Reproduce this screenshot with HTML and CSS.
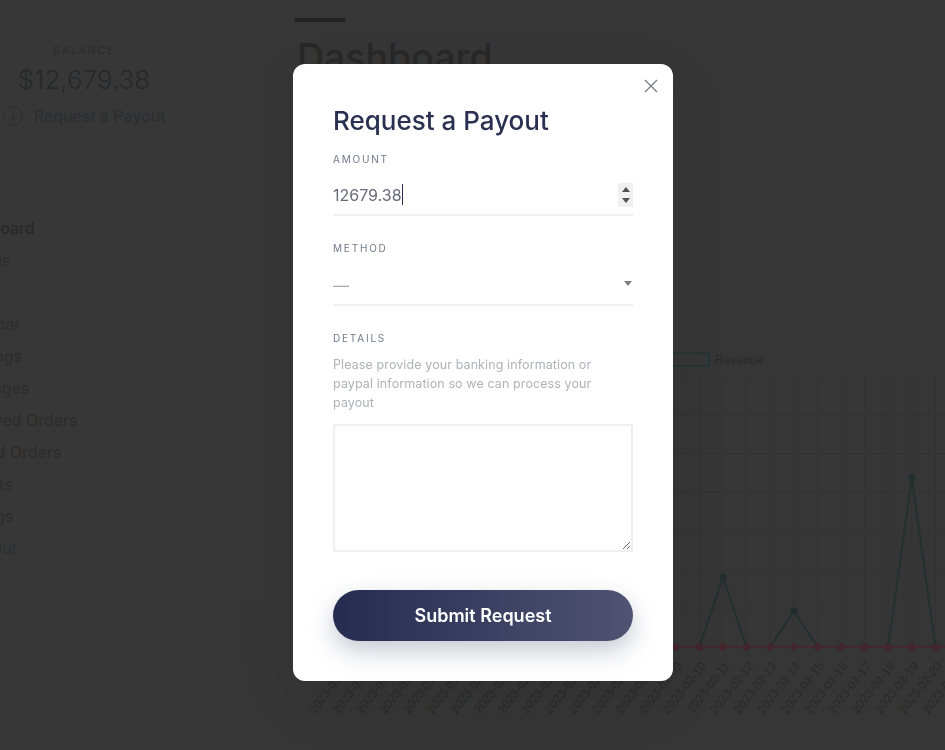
FILE: index.html
```html
<!DOCTYPE html>
<html lang="en">
<head>
  <meta charset="UTF-8" />
  <meta name="viewport" content="width=device-width, initial-scale=1.0"/>
  <title>Dashboard</title>
  <link rel="stylesheet" href="styles.css">
</head>
<body>

  <div class="page">
    <aside class="sidebar">
      <div class="balance">
        <div class="balance-label">BALANCE</div>
        <div class="balance-value">$12,679.38</div>
        <div class="payout-link">
          <svg class="payout-icon" viewBox="0 0 20 20" width="20" height="20" fill="none" stroke="currentColor" stroke-width="1">
            <circle cx="10" cy="10" r="9.300"/>
            <path d="M10 5.500v9M6.500 11l3.500 3.500L13.500 11"/>
          </svg>
          <span>Request a Payout</span>
        </div>
      </div>
      <nav class="menu">
        <a>Dashboard</a>
        <a>Listings</a>
      </nav>
      <nav class="menu">
        <a>Calendar</a>
        <a>Bookings</a>
        <a>Messages</a>
        <a>Received Orders</a>
        <a>Denied Orders</a>
        <a>Payouts</a>
        <a>Settings</a>
        <a class="logout">Sign Out</a>
      </nav>
    </aside>

    <main class="main">
      <div class="title-bar"></div>
      <h1>Dashboard</h1>
      <svg class="chart" id="chart" width="650" height="420" viewBox="0 330 650 420"></svg>
    </main>
  </div>

  <div class="overlay">
    <form class="modal">
      <button type="button" class="close" aria-label="Close">
        <svg viewBox="0 0 14 14" width="14" height="14" fill="none" stroke="currentColor" stroke-width="1.300">
          <path d="M1 1l12 12M13 1L1 13"/>
        </svg>
      </button>
      <h2>Request a Payout</h2>

      <label class="field-label" for="amount">AMOUNT</label>
      <div class="number-wrap">
        <input class="field-input" id="amount" type="number" step="0.01" value="12679.38">
        <span class="caret"></span>
        <span class="spinner"><i class="spin-up"></i><i class="spin-down"></i></span>
      </div>

      <label class="field-label method-label" for="method">METHOD</label>
      <div class="select-wrap">
        <select class="field-input" id="method">
          <option>—</option>
        </select>
      </div>

      <label class="field-label details-label" for="details">DETAILS</label>
      <p class="help">Please provide your banking information or paypal information so we can process your payout</p>
      <textarea class="details" id="details"></textarea>

      <button type="button" class="submit">Submit Request</button>
    </form>
  </div>

  <script>
    // revenue chart behind the modal
    const svg = document.getElementById('chart');
    const NS = 'http://www.w3.org/2000/svg';
    const left = 50.4, step = 23.6, base = 647;
    const peaks = { '02-11': 577, '02-14': 611, '02-19': 478 };

    function add(name, attrs, text) {
      const el = document.createElementNS(NS, name);
      Object.keys(attrs).forEach(k => el.setAttribute(k, attrs[k]));
      if (text) el.textContent = text;
      svg.appendChild(el);
    }

    const days = [];
    for (let i = 26; i <= 31; i++) days.push('01-' + i);
    for (let i = 1; i <= 21; i++) days.push('02-' + String(i).padStart(2, '0'));

    for (let i = 0; i < 8; i++) {
      const y = 376 + i * 38.7;
      add('line', { x1: 40, x2: 650, y1: y, y2: y, class: 'grid' });
    }
    days.forEach((d, i) => {
      const x = left + i * step;
      add('line', { x1: x, x2: x, y1: 376, y2: 653, class: 'grid' });
      add('text', { x: x + 7, y: 666, class: 'tick', transform: `rotate(-52 ${x + 7} 666)` }, '2023-' + d);
    });

    const pts = days.map((d, i) => [left + i * step, peaks[d] || base]);
    add('polyline', { points: pts.map(p => p.join(',')).join(' '), class: 'line-revenue' });
    add('line', { x1: left, x2: 650, y1: base, y2: base, class: 'line-refund' });
    pts.forEach(p => add('circle', { cx: p[0], cy: p[1], r: 3.500, class: 'dot-revenue' }));
    pts.forEach(p => add('circle', { cx: p[0], cy: base, r: 3.500, class: 'dot-refund' }));

    add('rect', { x: 365, y: 353.500, width: 49, height: 12.500, class: 'legend-box' });
    add('text', { x: 420, y: 363.500, class: 'legend' }, 'Revenue');
  </script>
</body>
</html>
```

FILE: styles.css
```css
* { margin: 0; padding: 0; box-sizing: border-box; }

html, body {
  width: 945px;
  height: 750px;
  overflow: hidden;
}

/* the page behind the modal is written in its dimmed colours */
body {
  background: #363636;
  color: #2a2a2a;
  font-family: 'Inter', sans-serif;
}

.page {
  display: flex;
  height: 750px;
}

/* sidebar, pushed off the left edge */
.sidebar {
  flex: none;
  width: 315px;
  height: 600px;
  margin-left: -50px;
  background: #373737;
}

.balance {
  width: 268px;
  padding-top: 44px;
  text-align: center;
}

.balance-label {
  font-size: 11px;
  line-height: 13px;
  letter-spacing: 1.500px;
  color: #2c2c2c;
}

.balance-value {
  margin-top: 6px;
  font-size: 26px;
  line-height: 34px;
  font-weight: 300;
  color: #26282c;
}

.payout-link {
  display: flex;
  justify-content: center;
  align-items: center;
  gap: 11px;
  margin-top: 7px;
  font-size: 16px;
  line-height: 24px;
  color: #2b2d31;
}

.payout-icon { color: #2d2d2d; }

.menu {
  display: flex;
  flex-direction: column;
  margin-bottom: 32px;
  padding-left: 2px;
}

.balance + .menu { margin-top: 84px; }

.menu a {
  font-size: 16px;
  line-height: 32px;
  color: #2c2c2c;
}

.menu a:first-child { color: #262626; }
.menu:last-child a:first-child { color: #2c2c2c; }
.menu a.logout { color: #2a2f33; }

/* main column */
.main {
  flex: 1;
  padding-top: 18px;
  padding-left: 30px;
  min-width: 0;
}

.title-bar {
  width: 50px;
  height: 4px;
  background: #212121;
}

h1 {
  margin-left: 2px;
  margin-top: 12px;
  font-size: 37.500px;
  line-height: 48px;
  font-weight: 500;
  color: #282828;
}

.chart {
  display: block;
  margin-top: 248px;
  overflow: visible;
}

.grid { stroke: #333; stroke-width: 1; }
.tick { font: 12px 'Liberation Sans', sans-serif; fill: #292929; text-anchor: end; }
.legend { font: 12px 'Liberation Sans', sans-serif; fill: #2a2a2a; }
.legend-box { fill: #363636; stroke: #233533; stroke-width: 2; }
.line-revenue { fill: none; stroke: #22302f; stroke-width: 2; }
.line-refund { stroke: #44282d; stroke-width: 2; }
.dot-revenue { fill: #1f2d2b; }
.dot-refund { fill: #44252b; }

/* modal */
.overlay {
  position: fixed;
  inset: 0;
  display: flex;
  justify-content: center;
  align-items: flex-start;
  padding-top: 64px;
  padding-left: 21px;
}

.modal {
  position: relative;
  width: 380px;
  height: 617px;
  padding: 40px;
  background: #fff;
  border-radius: 12px;
  box-shadow: 0 20px 60px rgba(0, 0, 0, 0.08);
  display: flex;
  flex-direction: column;
}

.close {
  position: absolute;
  top: 15px;
  right: 15px;
  width: 14px;
  height: 14px;
  border: none;
  background: none;
  color: #777b88;
  cursor: pointer;
}

.close svg { display: block; }

h2 {
  font-size: 26px;
  line-height: 34px;
  font-weight: 500;
  color: #2a3050;
}

.field-label {
  display: block;
  margin-top: 15px;
  font-size: 10px;
  line-height: 12px;
  letter-spacing: 1.800px;
  color: #6f7a8a;
}

.method-label { margin-top: 26px; }
.details-label { margin-top: 26px; }

.field-input {
  display: block;
  width: 100%;
  height: 44px;
  margin-top: 7px;
  padding-top: 4px;
  border: none;
  border-bottom: 2px solid #eeeef3;
  border-radius: 0;
  background: none;
  outline: none;
  font-family: 'Inter', sans-serif;
  font-size: 16px;
  color: #666a7a;
}

.number-wrap { position: relative; }

.number-wrap input { appearance: textfield; }

.caret {
  position: absolute;
  left: 69px;
  top: 19px;
  width: 1px;
  height: 21px;
  background: #252c50;
}

.spinner {
  position: absolute;
  right: 0;
  top: 18px;
  width: 15px;
  height: 24px;
  background: #f0f0f0;
  display: flex;
  flex-direction: column;
  align-items: center;
  justify-content: center;
  gap: 6px;
}

.spin-up, .spin-down {
  border-left: 4px solid transparent;
  border-right: 4px solid transparent;
}

.spin-up { border-bottom: 5px solid #505050; }
.spin-down { border-top: 5px solid #505050; }

.select-wrap { position: relative; }

.select-wrap select {
  height: 45px;
  appearance: none;
  color: #aaa;
}

.select-wrap::after {
  content: "";
  position: absolute;
  right: 1px;
  top: 27px;
  border-left: 4px solid transparent;
  border-right: 4px solid transparent;
  border-top: 5px solid #808080;
}

.help {
  margin-top: 11px;
  padding-right: 10px;
  font-size: 12.500px;
  line-height: 19px;
  letter-spacing: 0.100px;
  color: #b0b1ba;
}

.details {
  display: block;
  width: 100%;
  height: 128px;
  margin-top: 12px;
  border: 2px solid #eeeef3;
  border-radius: 0;
  outline: none;
  resize: vertical;
}

.submit {
  height: 51px;
  margin-top: 38px;
  border: none;
  border-radius: 26px;
  background: linear-gradient(90deg, #252c50, #505372);
  box-shadow: 0 10px 25px rgba(37, 44, 80, 0.25);
  color: #fff;
  font-family: 'Inter', sans-serif;
  font-size: 18px;
  font-weight: 600;
  cursor: pointer;
}
```
